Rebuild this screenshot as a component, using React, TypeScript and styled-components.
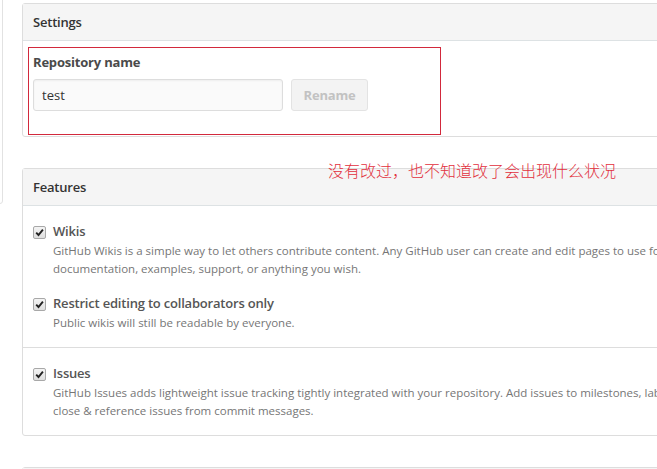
import React from "react";
import styled, { createGlobalStyle } from "styled-components";

const GlobalStyle = createGlobalStyle`
  html, body {
    margin: 0;
    padding: 0;
    background: #fff;
    overflow: hidden;
  }
  body {
    font-family: "Open Sans", "Noto Sans", sans-serif;
    color: #333;
  }
`;

const Page = styled.div`
  display: flex;
  align-items: flex-start;
  gap: 19px;
  width: 900px;
`;

const Sidebar = styled.div`
  flex-shrink: 0;
  width: 180px;
  height: 214px;
  margin-left: -177px;
  margin-top: -10px;
  border: 1px solid #e2e2e2;
  border-radius: 3px;
  box-sizing: border-box;
`;

const Main = styled.div`
  flex-shrink: 0;
  width: 760px;
  padding-top: 3px;
  display: flex;
  flex-direction: column;
  gap: 31px;
  position: relative;
`;

const Box = styled.section`
  border: 1px solid #ddd;
  border-radius: 3px;
  background: #fff;
`;

const BoxHeader = styled.h3`
  margin: 0;
  padding: 10px;
  height: 16px;
  line-height: 16px;
  font-size: 13px;
  font-weight: 600;
  color: #333;
  background: #f5f5f5;
  border-bottom: 1px solid #dde2e4;
  letter-spacing: -0.2px;
`;

const SettingsBody = styled.div`
  position: relative;
  padding: 11px 10px 25px;
`;

const Label = styled.label`
  display: block;
  font-size: 13px;
  font-weight: 700;
  line-height: 20px;
  color: #4a4a4a;
  margin-bottom: 7px;
  letter-spacing: -0.2px;
`;

const FormRow = styled.div`
  display: flex;
  gap: 8px;
`;

const TextInput = styled.input`
  box-sizing: border-box;
  width: 250px;
  height: 32px;
  padding: 0 8px;
  font-family: inherit;
  font-size: 13px;
  color: #333;
  background: #fafafa;
  border: 1px solid #ddd;
  border-radius: 3px;
  box-shadow: inset 0 1px 2px rgba(0, 0, 0, 0.05);
  outline: none;
`;

const Button = styled.button`
  box-sizing: border-box;
  width: 77px;
  height: 32px;
  font-family: inherit;
  font-size: 13px;
  font-weight: 700;
  color: #c2c2c2;
  background: #f3f3f3;
  border: 1px solid #e3e3e3;
  border-radius: 3px;
  letter-spacing: -0.2px;
`;

const RedMark = styled.div`
  position: absolute;
  left: 5px;
  top: 6px;
  width: 413px;
  height: 88px;
  box-sizing: border-box;
  border: 1px solid #d2293c;
  pointer-events: none;
`;

const Note = styled.div`
  position: absolute;
  left: 306px;
  top: 159px;
  font-family: "Noto Sans CJK SC", sans-serif;
  font-size: 16px;
  line-height: 22px;
  color: #e2303d;
  font-weight: 300;
`;

const FeaturesBody = styled.div`
  padding: 0 10px;
`;

const Divider = styled.hr`
  margin: 0 -10px;
  border: 0;
  border-top: 1px solid #ddd;
`;

const Feature = styled.div`
  position: relative;
  padding-left: 20px;
  margin: 15px 0;
`;

const Check = styled.span`
  position: absolute;
  left: 0;
  top: 5px;
  width: 13px;
  height: 13px;
  box-sizing: border-box;
  border: 1px solid #a8a8a8;
  border-radius: 2px;
  background: linear-gradient(#f4f4f4, #dedede);
  display: flex;
  align-items: center;
  justify-content: center;
`;

const FeatureTitle = styled.div`
  font-size: 13px;
  font-weight: 600;
  line-height: 20px;
  color: #555;
  letter-spacing: -0.2px;
`;

const FeatureNote = styled.p`
  margin: 1px 0 0;
  font-size: 11.5px;
  line-height: 18px;
  color: #767676;
  white-space: nowrap;
`;

const CheckMark = () => (
  <svg width="9" height="9" viewBox="0 0 9 9">
    <path d="M1.2 4.6 L3.5 7 L7.9 1.6" fill="none" stroke="#222" strokeWidth="1.9" />
  </svg>
);

const features = [
  {
    title: "Wikis",
    lines: [
      "GitHub Wikis is a simple way to let others contribute content. Any GitHub user can create and edit pages to use for",
      "documentation, examples, support, or anything you wish.",
    ],
  },
  {
    title: "Restrict editing to collaborators only",
    lines: ["Public wikis will still be readable by everyone."],
  },
];

const issues = {
  title: "Issues",
  lines: [
    "GitHub Issues adds lightweight issue tracking tightly integrated with your repository. Add issues to milestones, label",
    "close & reference issues from commit messages.",
  ],
};

const FeatureItem = ({ title, lines }: { title: string; lines: string[] }) => (
  <Feature>
    <Check>
      <CheckMark />
    </Check>
    <FeatureTitle>{title}</FeatureTitle>
    <FeatureNote>
      {lines.map((l, i) => (
        <React.Fragment key={i}>
          {l}
          {i < lines.length - 1 && <br />}
        </React.Fragment>
      ))}
    </FeatureNote>
  </Feature>
);

const App = () => {
  return (
    <>
      <GlobalStyle />
      <Page>
        <Sidebar />
        <Main>
          <Box>
            <BoxHeader>Settings</BoxHeader>
            <SettingsBody>
              <Label>Repository name</Label>
              <FormRow>
                <TextInput defaultValue="test" />
                <Button>Rename</Button>
              </FormRow>
              <RedMark />
            </SettingsBody>
          </Box>
          <Box>
            <BoxHeader>Features</BoxHeader>
            <FeaturesBody>
              {features.map((f) => (
                <FeatureItem key={f.title} title={f.title} lines={f.lines} />
              ))}
              <Divider />
              <FeatureItem title={issues.title} lines={issues.lines} />
            </FeaturesBody>
          </Box>
          <Box>
            <BoxHeader />
          </Box>
          <Note>没有改过，也不知道改了会出现什么状况</Note>
        </Main>
      </Page>
    </>
  );
};

export default App;
